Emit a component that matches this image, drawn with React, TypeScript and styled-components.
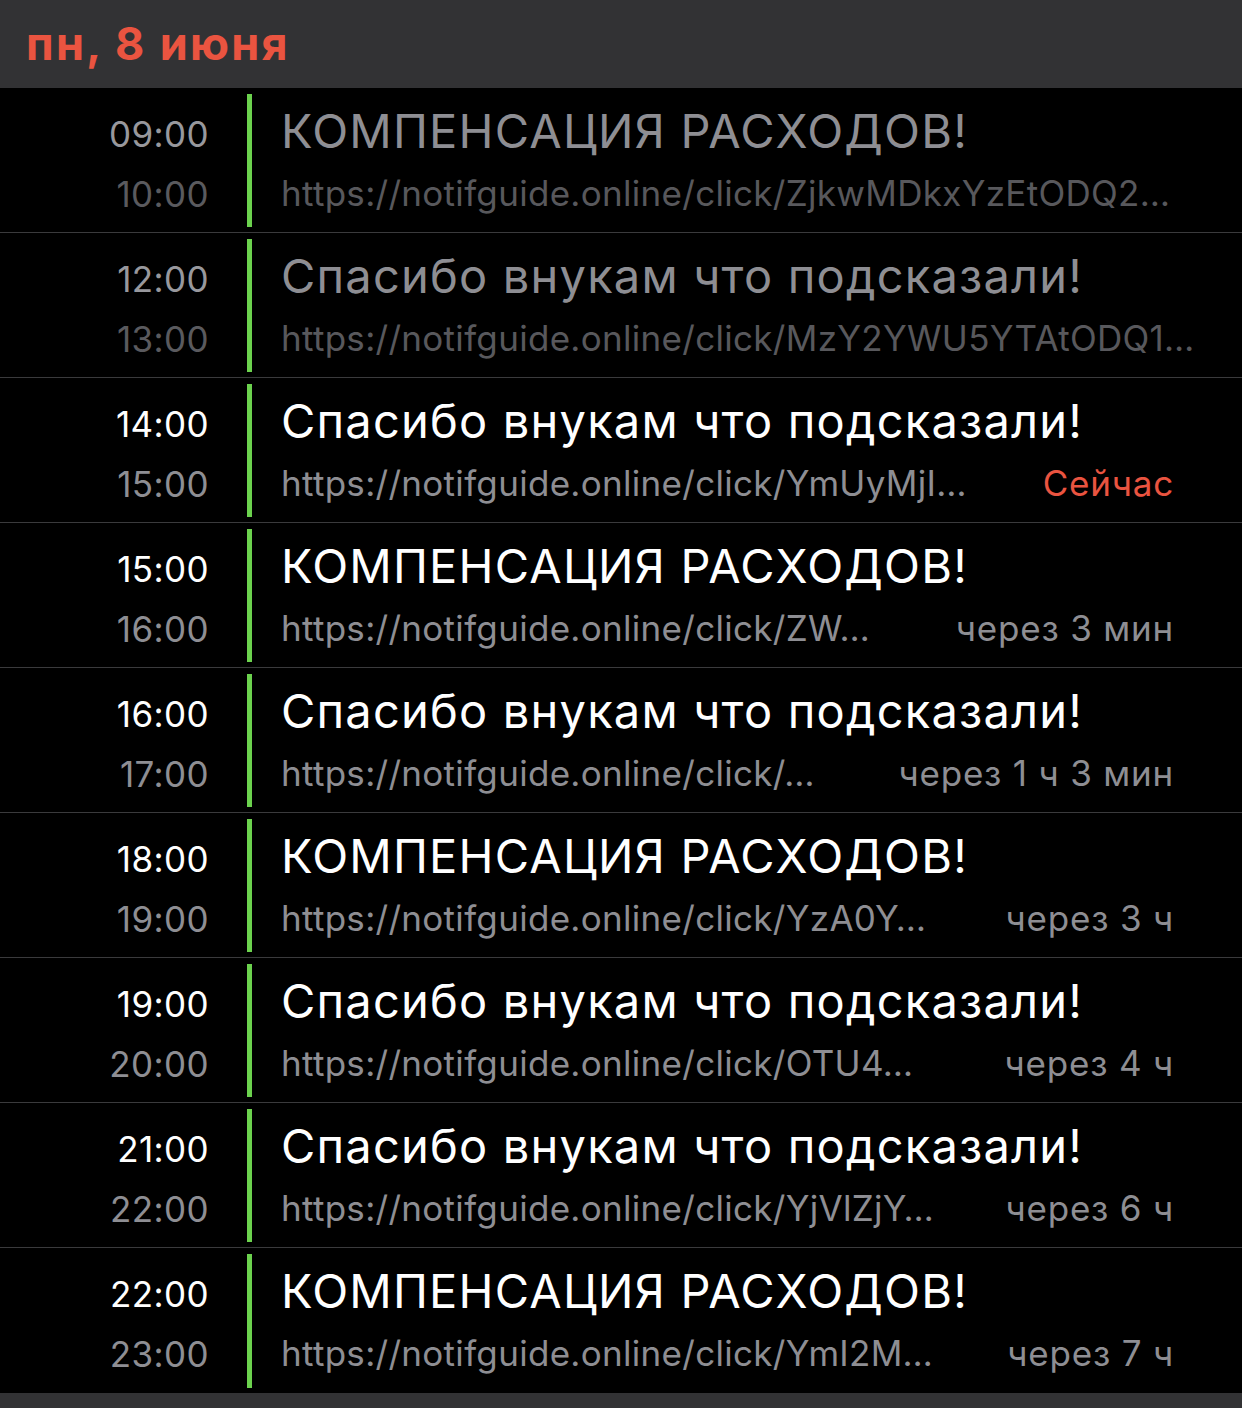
import React from "react";
import styled, { createGlobalStyle } from "styled-components";

const Global = createGlobalStyle`
  html, body { margin: 0; padding: 0; background: #000; }
  body { font-family: Inter, "Liberation Sans", sans-serif; -webkit-font-smoothing: antialiased; }
`;

const Page = styled.div`
  width: 1242px;
  min-height: 1408px;
  background: #000;
  display: flex;
  flex-direction: column;
`;

const Header = styled.header`
  height: 88px;
  background: #323234;
  box-sizing: border-box;
  padding: 14px 0 0 26px;
`;

const DateTitle = styled.h1`
  margin: 0;
  font-size: 45px;
  line-height: 60px;
  font-weight: 700;
  color: #ea5440;
  letter-spacing: 2.3px;
`;

const List = styled.div`
  display: flex;
  flex-direction: column;
`;

const Row = styled.div`
  height: 145px;
  box-sizing: border-box;
  padding: 6px 0 5px;
  border-bottom: 1px solid #3a3a3c;
  display: grid;
  grid-template-columns: 209px 5px 1fr;
  column-gap: 38px;
  &:last-child { border-bottom: none; }
`;

const Times = styled.div`
  display: flex;
  flex-direction: column;
  align-items: flex-end;
  padding-top: 18px;
`;

const Time = styled.span<{ $tone: string }>`
  font-size: 35px;
  line-height: 44px;
  color: ${(p) => p.$tone};
  letter-spacing: 0.4px;
  & + & { margin-top: 16px; }
`;

const Bar = styled.div`
  background: #6cd24e;
`;

const Content = styled.div`
  display: flex;
  flex-direction: column;
  padding: 7px 68px 0 0;
  margin-left: -9px;
  min-width: 0;
`;

const Title = styled.div<{ $tone: string }>`
  font-size: 47px;
  line-height: 60px;
  color: ${(p) => p.$tone};
  white-space: nowrap;
  letter-spacing: 1.2px;
`;

const Sub = styled.div`
  display: flex;
  align-items: baseline;
  margin-top: 10px;
  white-space: nowrap;
`;

const Url = styled.span<{ $tone: string }>`
  font-size: 35px;
  line-height: 44px;
  color: ${(p) => p.$tone};
  letter-spacing: 0.3px;
`;

const When = styled.span<{ $now?: boolean }>`
  margin-left: auto;
  font-size: 35px;
  line-height: 44px;
  letter-spacing: 0.8px;
  color: ${(p) => (p.$now ? "#ea5440" : "#8e8e93")};
`;

const Footer = styled.div`
  flex: 1;
  background: #323234;
  min-height: 16px;
`;

type Ev = { start: string; end: string; title: string; url: string; when?: string; past?: boolean; now?: boolean };

const KOMP = "КОМПЕНСАЦИЯ РАСХОДОВ!";
const SPAS = "Спасибо внукам что подсказали!";

const events: Ev[] = [
  { start: "09:00", end: "10:00", title: KOMP, url: "https://notifguide.online/click/ZjkwMDkxYzEtODQ2…", past: true },
  { start: "12:00", end: "13:00", title: SPAS, url: "https://notifguide.online/click/MzY2YWU5YTAtODQ1…", past: true },
  { start: "14:00", end: "15:00", title: SPAS, url: "https://notifguide.online/click/YmUyMjI…", when: "Сейчас", now: true },
  { start: "15:00", end: "16:00", title: KOMP, url: "https://notifguide.online/click/ZW…", when: "через 3 мин" },
  { start: "16:00", end: "17:00", title: SPAS, url: "https://notifguide.online/click/…", when: "через 1 ч 3 мин" },
  { start: "18:00", end: "19:00", title: KOMP, url: "https://notifguide.online/click/YzA0Y…", when: "через 3 ч" },
  { start: "19:00", end: "20:00", title: SPAS, url: "https://notifguide.online/click/OTU4…", when: "через 4 ч" },
  { start: "21:00", end: "22:00", title: SPAS, url: "https://notifguide.online/click/YjVlZjY…", when: "через 6 ч" },
  { start: "22:00", end: "23:00", title: KOMP, url: "https://notifguide.online/click/YmI2M…", when: "через 7 ч" },
];

export default function App() {
  return (
    <Page>
      <Global />
      <Header>
        <DateTitle>пн, 8 июня</DateTitle>
      </Header>
      <List>
        {events.map((e, i) => (
          <Row key={i}>
            <Times>
              <Time $tone={e.past ? "#98989d" : "#ffffff"}>{e.start}</Time>
              <Time $tone={e.past ? "#5a5a5e" : "#8e8e93"}>{e.end}</Time>
            </Times>
            <Bar />
            <Content>
              <Title $tone={e.past ? "#8e8e93" : "#ffffff"}>{e.title}</Title>
              <Sub>
                <Url $tone={e.past ? "#58585c" : "#8e8e93"}>{e.url}</Url>
                {e.when && <When $now={e.now}>{e.when}</When>}
              </Sub>
            </Content>
          </Row>
        ))}
      </List>
      <Footer />
    </Page>
  );
}
